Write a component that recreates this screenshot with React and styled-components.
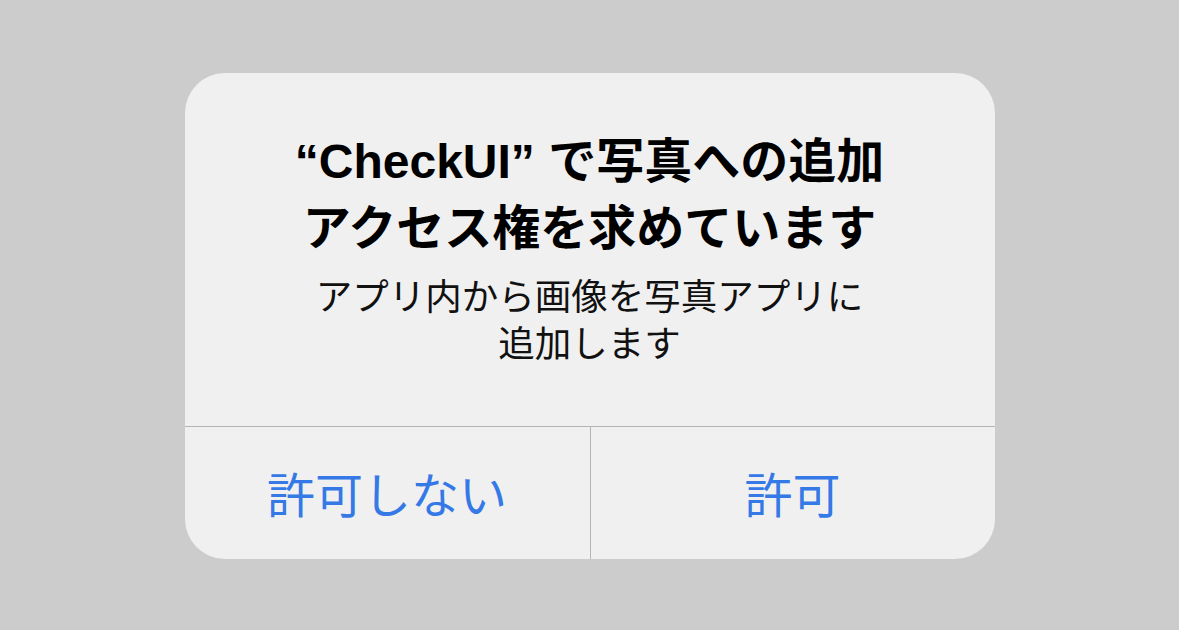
import React from "react";
import styled, { createGlobalStyle } from "styled-components";

const GlobalStyle = createGlobalStyle`
  html, body {
    margin: 0;
    padding: 0;
    background: #cccccc;
  }
  body {
    font-family: "Liberation Sans", "Noto Sans CJK JP", sans-serif;
  }
`;

const Screen = styled.div`
  width: 100vw;
  height: 100vh;
  box-sizing: border-box;
  padding-top: 73px;
  display: flex;
  align-items: flex-start;
  justify-content: center;
`;

const Alert = styled.div`
  width: 810px;
  height: 486px;
  background: #f0f0f0;
  border-radius: 40px;
  overflow: hidden;
  display: flex;
  flex-direction: column;
`;

const Body = styled.div`
  flex: 1;
  display: flex;
  flex-direction: column;
  align-items: center;
  justify-content: center;
  gap: 9px;
  padding: 0 40px 6px;
  text-align: center;
`;

const Title = styled.h1`
  margin: 0;
  font-family: "Liberation Sans", "Noto Sans CJK JP", sans-serif;
  font-size: 48px;
  font-weight: 700;
  line-height: 67px;
  color: #000;
`;

const Message = styled.p`
  margin: 0;
  font-family: "Noto Sans CJK JP", sans-serif;
  font-size: 36.5px;
  font-weight: 400;
  line-height: 47px;
  color: #111;
`;

const Actions = styled.div`
  height: 132px;
  display: grid;
  grid-template-columns: 1fr 1fr;
  border-top: 1px solid #b4b4b4;
`;

const ActionButton = styled.button`
  border: none;
  background: transparent;
  margin: 0;
  padding: 0 0 2px;
  font-family: "Noto Sans CJK JP", sans-serif;
  font-size: 48px;
  font-weight: 400;
  color: #3479e6;
  display: flex;
  align-items: center;
  justify-content: center;
  & + & {
    border-left: 1px solid #b4b4b4;
  }
`;

export default function App() {
  return (
    <>
      <GlobalStyle />
      <Screen>
        <Alert role="alertdialog">
          <Body>
            <Title>
              “CheckUI” で写真への追加
              <br />
              アクセス権を求めています
            </Title>
            <Message>
              アプリ内から画像を写真アプリに
              <br />
              追加します
            </Message>
          </Body>
          <Actions>
            <ActionButton>許可しない</ActionButton>
            <ActionButton>許可</ActionButton>
          </Actions>
        </Alert>
      </Screen>
    </>
  );
}
